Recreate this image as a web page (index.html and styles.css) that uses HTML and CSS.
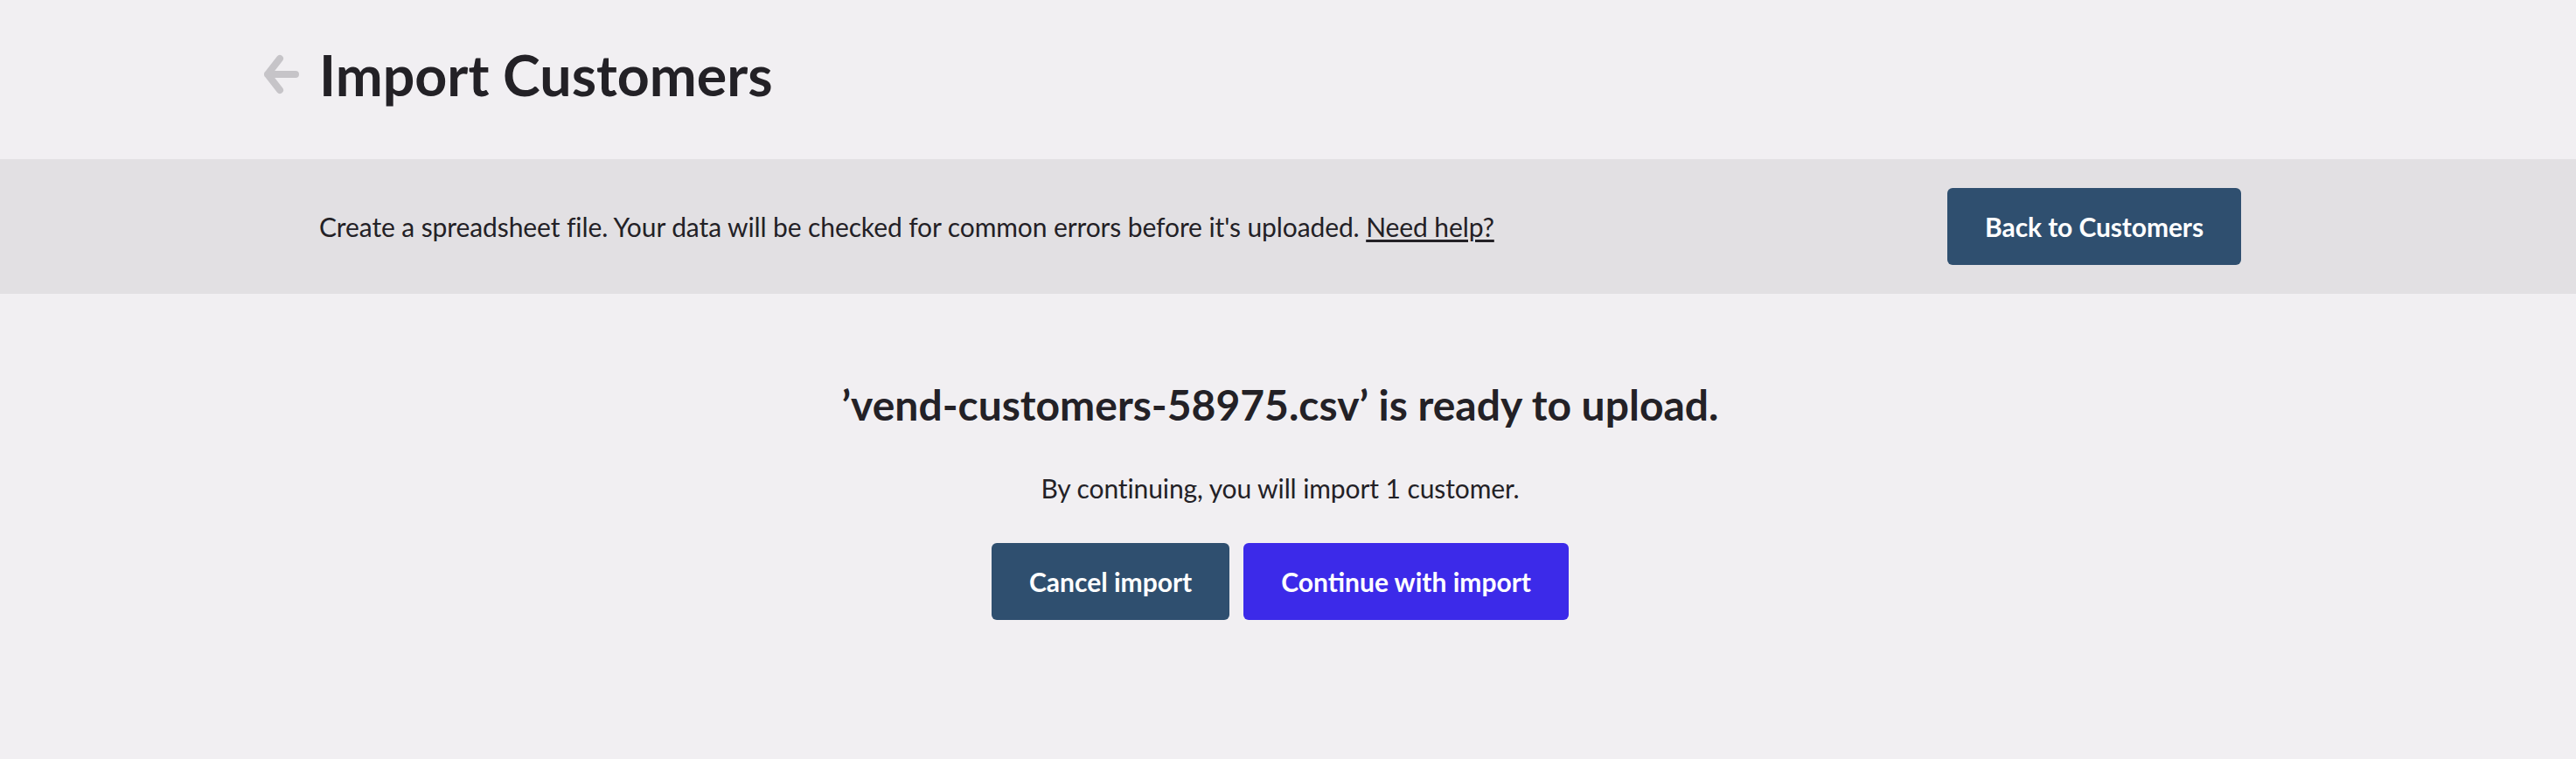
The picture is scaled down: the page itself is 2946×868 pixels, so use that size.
FILE: index.html
```html
<!DOCTYPE html>
<html lang="en">
<head>
<meta charset="utf-8">
<title>Import Customers</title>
<link rel="stylesheet" href="styles.css">
</head>
<body>
<div class="page">
  <header class="header">
    <div class="container title-row">
      <a class="back-arrow" href="#" aria-label="Back">
        <svg width="42" height="46" viewBox="0 0 42 46" fill="none" stroke="#c6c4c8" stroke-width="8" stroke-linecap="round" stroke-linejoin="round">
          <path d="M37 23 H5 M19 5 L5 23 L19 41"/>
        </svg>
      </a>
      <h1 class="title">Import Customers</h1>
    </div>
  </header>
  <section class="band">
    <div class="container band-row">
      <p class="band-text">Create a spreadsheet file. Your data will be checked for common errors before it's uploaded. <a href="#" class="help-link">Need help?</a></p>
      <button class="btn btn-dark btn-back">Back to Customers</button>
    </div>
  </section>
  <main class="main">
    <div class="container center">
      <h2 class="ready">’vend-customers-58975.csv’ is ready to upload.</h2>
      <p class="summary">By continuing, you will import 1 customer.</p>
      <div class="actions">
        <button class="btn btn-dark">Cancel import</button>
        <button class="btn btn-primary">Continue with import</button>
      </div>
    </div>
  </main>
</div>
</body>
</html>
```
FILE: styles.css
```css
* { box-sizing: border-box; }
html, body {
  margin: 0;
  padding: 0;
  background: #f1eff2;
}
body {
  font-family: Lato, "Open Sans", "Liberation Sans", sans-serif;
  color: #232126;
  width: 2946px;
  height: 868px;
  overflow: hidden;
}
.container {
  width: 2198px;
  margin-left: calc(50% - 1108px);
}
.header {
  height: 182px;
  padding-top: 53px;
}
.title-row {
  display: flex;
  align-items: center;
}
.back-arrow {
  display: flex;
  margin-left: -64px;
  margin-right: 22px;
}
.title {
  margin: 0;
  font-size: 64.5px;
  line-height: 64px;
  font-weight: 700;
}
.band {
  background: #e2e0e3;
  height: 154px;
}
.band-row {
  height: 100%;
  display: flex;
  align-items: center;
  justify-content: space-between;
}
.band-text {
  margin: 0;
  font-size: 30px;
  line-height: 36px;
  letter-spacing: -0.1px;
}
.help-link {
  color: #232126;
  text-decoration: underline;
  text-underline-offset: 3px;
}
.btn {
  font-family: Lato, "Open Sans", "Liberation Sans", sans-serif;
  font-size: 30px;
  font-weight: 700;
  color: #ffffff;
  border: none;
  border-radius: 6px;
  height: 88px;
  padding: 0 43px;
  cursor: pointer;
}
.btn-back {
  letter-spacing: -0.1px;
}
.btn-dark { background: #2f4f6f; }
.btn-primary { background: #3c2ae9; }
.main {
  padding-top: 98px;
}
.center {
  display: flex;
  flex-direction: column;
  align-items: center;
}
.ready {
  margin: 0;
  font-size: 48px;
  line-height: 58px;
  font-weight: 700;
}
.summary {
  margin: 48px 0 0;
  font-size: 30px;
  line-height: 36px;
  letter-spacing: -0.1px;
}
.actions {
  margin-top: 45px;
  display: flex;
  gap: 16px;
}
```
